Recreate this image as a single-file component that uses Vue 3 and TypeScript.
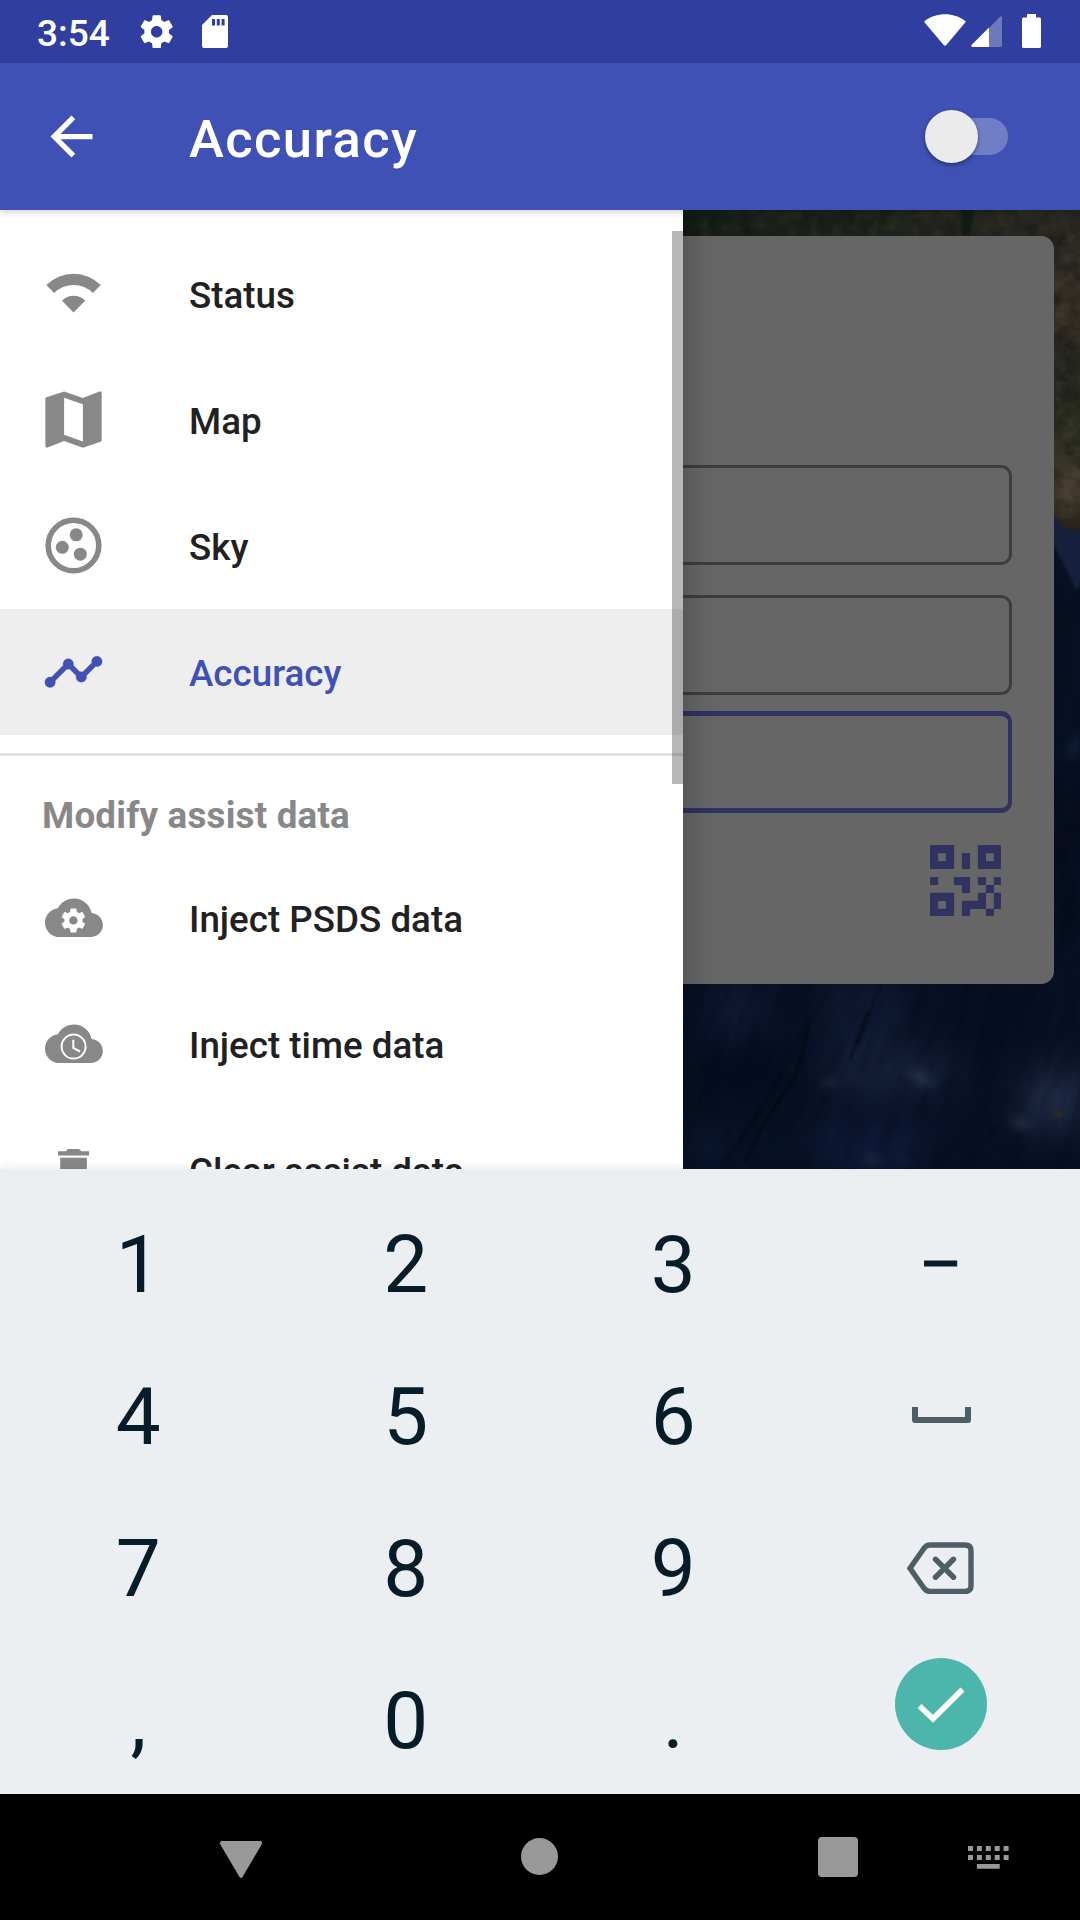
<script setup lang="ts">
interface MenuEntry {
  id: string
  label: string
}

const views: MenuEntry[] = [
  { id: 'status', label: 'Status' },
  { id: 'map', label: 'Map' },
  { id: 'sky', label: 'Sky' },
  { id: 'accuracy', label: 'Accuracy' },
]

const actions: MenuEntry[] = [
  { id: 'psds', label: 'Inject PSDS data' },
  { id: 'time', label: 'Inject time data' },
  { id: 'clear', label: 'Clear assist data' },
]

const active = 'accuracy'

const keys: string[] = ['1', '2', '3', '–', '4', '5', '6', 'space', '7', '8', '9', 'delete', ',', '0', '.', 'enter']

const qrRows: string[] = [
  '111000111',
  '101010101',
  '111010111',
  '000000000',
  '100110101',
  '000010010',
  '111000101',
  '101011101',
  '111010010',
]
const qrPath = qrRows
  .map((row, y) => [...row].map((cell, x) => (cell === '1' ? `M${x} ${y}h1.02v1.02h-1.02z` : '')).join(''))
  .join('')

const gear =
  'M19.43 12.98c.04-.32.07-.64.07-.98s-.03-.66-.07-.98l2.11-1.65c.19-.15.24-.42.12-.64l-2-3.46c-.12-.22-.39-.3-.61-.22l-2.49 1c-.52-.4-1.08-.73-1.69-.98l-.38-2.65C14.46 2.18 14.25 2 14 2h-4c-.25 0-.46.18-.49.42l-.38 2.65c-.61.25-1.17.59-1.69.98l-2.49-1c-.23-.09-.49 0-.61.22l-2 3.46c-.13.22-.07.49.12.64l2.11 1.65c-.04.32-.07.65-.07.98s.03.66.07.98l-2.11 1.65c-.19.15-.24.42-.12.64l2 3.46c.12.22.39.3.61.22l2.49-1c.52.4 1.08.73 1.69.98l.38 2.65c.03.24.24.42.49.42h4c.25 0 .46-.18.49-.42l.38-2.65c.61-.25 1.17-.59 1.69-.98l2.49 1c.23.09.49 0 .61-.22l2-3.46c.12-.22.07-.49-.12-.64l-2.11-1.65zM12 15.5c-1.93 0-3.5-1.57-3.5-3.5s1.57-3.5 3.5-3.5 3.5 1.57 3.5 3.5-1.57 3.5-3.5 3.5z'
const cloud =
  'M19.35 10.04C18.67 6.59 15.64 4 12 4 9.11 4 6.6 5.64 5.35 8.04 2.34 8.36 0 10.91 0 14c0 3.31 2.69 6 6 6h13c2.76 0 5-2.24 5-5 0-2.64-2.05-4.78-4.65-4.96z'
</script>

<template>
  <div class="screen">
    <header class="statusbar">
      <span class="clock">3:54</span>
      <svg class="sb-gear" viewBox="0 0 24 24"><path :d="gear" /></svg>
      <svg class="sb-sd" viewBox="0 0 26 33">
        <path fill-rule="evenodd" d="M10 0H24Q26 0 26 2V31Q26 33 24 33H2Q0 33 0 31V10zM10 4V10.600h3V4zM14.800 4V10.600h3V4zM19.600 4V10.600h3V4z" />
      </svg>
      <span class="spacer"></span>
      <svg class="sb-wifi" viewBox="0 0 42 33">
        <path d="M.6 8.600Q-.1 7.600 1 6.800C12-2 30-2 41 6.800Q42 7.600 41.200 8.600L22.300 31Q21 32.500 19.700 31z" />
      </svg>
      <svg class="sb-signal" viewBox="0 0 31 31">
        <path opacity=".3" d="M18 31V12L29 .7Q31-.5 31 2V29Q31 31 29 31z" />
        <path d="M18 11.500V31H1.500Q-.5 31 .5 29z" />
      </svg>
      <svg class="sb-battery" viewBox="0 0 19 34">
        <path d="M5 0h9v3.500h3.500q1.500 0 1.500 1.500v27.500q0 1.500-1.500 1.500h-16Q0 34 0 32.500V5q0-1.500 1.500-1.500H5z" />
      </svg>
    </header>

    <header class="appbar">
      <svg class="back" viewBox="0 0 24 24">
        <path d="M20 11H7.830l5.590-5.590L12 4l-8 8 8 8 1.410-1.410L7.830 13H20v-2z" />
      </svg>
      <h1 class="title">Accuracy</h1>
      <div class="switch"><span class="thumb"></span></div>
    </header>

    <main class="stage">
      <svg class="terrain" viewBox="0 0 1080 959" preserveAspectRatio="none" color-interpolation-filters="sRGB">
        <defs>
          <filter id="soft" x="620" y="300" width="480" height="680" filterUnits="userSpaceOnUse"><feGaussianBlur stdDeviation="17" /></filter>
          <filter id="softer" x="-50%" y="-50%" width="200%" height="200%"><feGaussianBlur stdDeviation="5" /></filter>
          <filter id="edge" x="-20%" y="-20%" width="140%" height="140%"><feGaussianBlur stdDeviation="1.200" /></filter>
          <filter id="landGrain" x="0" y="0" width="100%" height="100%">
            <feTurbulence type="fractalNoise" baseFrequency=".09" numOctaves="4" seed="5" />
            <feColorMatrix values="0 0 0 0 .27  0 0 0 0 .25  0 0 0 0 .19  2 0 0 0 -.85" />
          </filter>
          <filter id="landShade" x="0" y="0" width="100%" height="100%">
            <feTurbulence type="fractalNoise" baseFrequency=".05" numOctaves="5" seed="12" />
            <feColorMatrix values="0 0 0 0 .05  0 0 0 0 .07  0 0 0 0 .05  2 0 0 0 -.85" />
          </filter>
          <filter id="seaGrain" x="0" y="0" width="100%" height="100%">
            <feTurbulence type="fractalNoise" baseFrequency=".07 .018" numOctaves="4" seed="9" />
            <feColorMatrix values="0 0 0 0 0  0 0 0 0 .01  0 0 0 0 .05  2 0 0 0 -.85" />
          </filter>
          <linearGradient id="north" x1="683" x2="1080" y1="0" y2="0" gradientUnits="userSpaceOnUse">
            <stop offset="0" stop-color="#141e17" />
            <stop offset=".5" stop-color="#1e231d" />
            <stop offset="1" stop-color="#2b2822" />
          </linearGradient>
          <linearGradient id="coast" x1="0" x2="0" y1="26" y2="320" gradientUnits="userSpaceOnUse">
            <stop offset="0" stop-color="#2a2821" />
            <stop offset=".25" stop-color="#382f28" />
            <stop offset=".45" stop-color="#25271f" />
            <stop offset=".65" stop-color="#2b2d21" />
            <stop offset=".85" stop-color="#41372b" />
            <stop offset="1" stop-color="#25221a" />
          </linearGradient>
        </defs>
        <rect width="1080" height="959" fill="#081124" />
        <g filter="url(#soft)">
          <ellipse cx="735" cy="808" rx="24" ry="34" fill="#141a38" />
          <ellipse cx="745" cy="862" rx="45" ry="30" fill="#040c1f" />
          <ellipse cx="865" cy="805" rx="40" ry="40" fill="#101a33" />
          <ellipse cx="890" cy="862" rx="70" ry="22" fill="#17213b" />
          <ellipse cx="1000" cy="800" rx="36" ry="50" fill="#070e22" />
          <ellipse cx="870" cy="937" rx="60" ry="26" fill="#101b3b" />
          <ellipse cx="1055" cy="890" rx="34" ry="34" fill="#212b46" />
          <ellipse cx="700" cy="940" rx="50" ry="20" fill="#0c162d" />
          <ellipse cx="1066" cy="640" rx="20" ry="80" fill="#060d1f" />
        </g>
        <g transform="rotate(20 850 860)">
          <rect width="600" height="460" x="580" y="640" filter="url(#seaGrain)" opacity=".28" />
        </g>
        <rect width="30" height="440" x="1052" y="320" filter="url(#seaGrain)" opacity=".3" />
        <g fill="none" stroke="#02070f" filter="url(#edge)">
          <path stroke-width="3" d="M745 952Q770 900 786 880T808 812" opacity=".7" />
          <path stroke-width="2" d="M725 950Q760 905 780 865M850 850L868 800M858 835L880 774" opacity=".6" />
          <path stroke-width="2" d="M968 952L996 915M800 790L812 774" opacity=".4" />
        </g>
        <g fill="#38435c" filter="url(#softer)" opacity=".5">
          <path d="M818 875q8-8 22-5l-9 7zM848 866q10-2 12 7zM906 860q18-4 30 15l-14 2-8-7zM1008 908q14-4 26 8l-16 4zM864 945q12-3 20 9h-14zM898 952q8-8 14 5z" />
        </g>
        <ellipse cx="1058" cy="904" rx="5" ry="4" fill="#2b2927" filter="url(#edge)" />
        <path d="M1080 520q-16 14-12 30l12-8z" fill="#1a2945" filter="url(#softer)" opacity=".6" />
        <rect width="1080" height="30" fill="url(#north)" />
        <path d="M1050 24h30v298q-10 4-18-2t-12-14z" fill="url(#coast)" />
        <path d="M1080 256q-10 8-26 18v26l26-6z" fill="#4a3f32" filter="url(#softer)" />
        <rect width="1080" height="30" filter="url(#landGrain)" opacity=".3" />
        <rect x="1054" y="24" width="26" height="284" filter="url(#landGrain)" opacity=".6" />
        <rect x="1050" y="24" width="30" height="284" filter="url(#landShade)" opacity=".6" />
        <rect x="680" y="0" width="400" height="30" filter="url(#landShade)" opacity=".5" />
        <path d="M1052 302q10 22 30 18v46q-4 20-8 10t-22-44z" fill="#16203c" filter="url(#edge)" />
        <path d="M961 0h14l-5 26h-8z" fill="#0b1a14" filter="url(#edge)" opacity=".8" />
      </svg>

      <section class="card">
        <div class="field"></div>
        <div class="field second"></div>
        <div class="field focused"></div>
        <svg class="qr" viewBox="0 0 9 9"><path :d="qrPath" /></svg>
      </section>

      <nav class="drawer">
        <ul class="menu views">
          <li v-for="item in views" :key="item.id" class="row" :class="{ active: item.id === active }">
            <svg class="icon" viewBox="0 0 75 75">
              <path v-if="item.id === 'status'" d="M10.300 29a38.600 38.600 0 0 1 54.500 0l-7.900 8a27.400 27.400 0 0 0-38.700 0zM26 44.700a16.300 16.300 0 0 1 23.200 0L37.500 56.400z" />
              <path v-else-if="item.id === 'map'" transform="scale(3.125)" d="M20.500 3l-.16.03L15 5.100 9 3 3.360 4.900c-.21.07-.36.25-.36.48V20.500c0 .28.220.5.5.5l.16-.03L9 18.900l6 2.100 5.640-1.900c.21-.07.36-.25.36-.48V3l-.5 0zM15 19l-6-2.110V5l6 2.110V19z" />
              <g v-else-if="item.id === 'sky'">
                <circle cx="37.500" cy="37.500" r="25.300" fill="none" stroke="currentColor" stroke-width="5.600" />
                <circle cx="40.200" cy="26.800" r="6.500" />
                <circle cx="26.300" cy="39.300" r="6.500" />
                <circle cx="44.300" cy="46.200" r="6.500" />
              </g>
              <path v-else transform="translate(6.300 6.600) scale(2.600)" stroke="currentColor" stroke-width=".15" d="M23 8c0 1.100-.9 2-2 2-.18 0-.35-.02-.51-.07l-3.560 3.550c.05.160.07.340.07.520 0 1.100-.9 2-2 2s-2-.9-2-2c0-.18.020-.36.070-.52l-2.550-2.550c-.16.050-.34.070-.52.070s-.36-.02-.52-.07l-4.550 4.560c.05.160.07.330.07.510 0 1.100-.9 2-2 2s-2-.9-2-2 .9-2 2-2c.18 0 .35.020.51.070l4.560-4.550C8.020 9.360 8 9.180 8 9c0-1.100.9-2 2-2s2 .9 2 2c0 .18-.02.36-.07.52l2.550 2.550c.16-.05.34-.07.52-.07s.36.020.52.070l3.550-3.560C19.020 8.350 19 8.180 19 8c0-1.100.9-2 2-2s2 .9 2 2z" />
            </svg>
            <span>{{ item.label }}</span>
          </li>
        </ul>
        <h2 class="group">Modify assist data</h2>
        <ul class="menu">
          <li v-for="item in actions" :key="item.id" class="row">
            <svg class="icon" viewBox="0 0 75 75">
              <path v-if="item.id !== 'clear'" transform="translate(9 7.900) scale(2.410)" :d="cloud" />
              <path v-if="item.id === 'psds'" fill="#fff" transform="translate(23 25) scale(1.200)" :d="gear" />
              <g v-else-if="item.id === 'time'" fill="none" stroke="#fff" stroke-width="2">
                <circle cx="37.600" cy="39.600" r="12" />
                <path d="M37.300 32.800v8.200l6.700 3.500" />
              </g>
              <path v-else transform="translate(10.900 9.300) scale(2.220)" d="M6 19c0 1.100.9 2 2 2h8c1.100 0 2-.9 2-2V7H6v12zM19 4h-3.500l-1-1h-5l-1 1H5v2h14V4z" />
            </svg>
            <span>{{ item.label }}</span>
          </li>
        </ul>
        <span class="scrollbar"></span>
      </nav>
    </main>

    <section class="keyboard">
      <div v-for="key in keys" :key="key" class="key">
        <svg v-if="key === 'space'" class="k-space" viewBox="0 0 59 16">
          <path d="M3 0V13H56V0" fill="none" stroke="#4d5e67" stroke-width="6" stroke-linejoin="round" />
        </svg>
        <svg v-else-if="key === 'delete'" class="k-del" viewBox="0 0 67 52">
          <path d="M3 26L17 6Q19.500 2.800 23 2.800H58Q64 2.800 64 8.500V43.500Q64 49.200 58 49.200H23Q19.500 49.200 17 46zM28.500 17L46.500 35M46.500 17L28.500 35" fill="none" stroke="#4d5e67" stroke-width="5.400" stroke-linecap="round" />
        </svg>
        <span v-else-if="key === 'enter'" class="k-enter">
          <svg viewBox="0 0 92 92"><path d="M24.500 48L38 60.800L67.500 31.500" fill="none" stroke="#fff" stroke-width="5.600" /></svg>
        </span>
        <span v-else class="glyph" :class="{ dash: key === '–' }">{{ key }}</span>
      </div>
    </section>

    <footer class="navbar">
      <svg class="n-back" viewBox="0 0 42 37">
        <path d="M2 0H40Q43 .5 41.600 3.500L22.500 36Q21 38 19.500 36L.4 3.500Q-1 .5 2 0z" />
      </svg>
      <span class="n-home"></span>
      <span class="n-recent"></span>
      <svg class="n-ime" viewBox="0 0 41 23">
        <path d="M0 0h5v5h-5zM8.900 0h5v5h-5zM17.800 0h5v5h-5zM26.700 0h5v5h-5zM35.600 0h5v5h-5zM0 9h5v5h-5zM8.900 9h5v5h-5zM17.800 9h5v5h-5zM26.700 9h5v5h-5zM35.600 9h5v5h-5zM8.900 18h22.800v4.800H8.900z" />
      </svg>
    </footer>
  </div>
</template>

<style>
body {
  margin: 0;
  background: #000;
}
</style>

<style scoped>
.screen {
  width: 1080px;
  height: 1920px;
  display: flex;
  flex-direction: column;
  overflow: hidden;
  font-family: Roboto, 'Liberation Sans', sans-serif;
}
svg {
  display: block;
  flex: none;
  fill: currentColor;
}
.statusbar {
  height: 63px;
  flex: none;
  box-sizing: border-box;
  display: flex;
  align-items: flex-start;
  padding: 0 39px 0 37px;
  background: #303f9f;
  color: #fff;
}
.clock {
  width: 100px;
  padding-top: 12px;
  font-size: 37px;
  font-weight: 500;
  line-height: 44px;
}
.sb-gear {
  width: 39.400px;
  height: 39.400px;
  margin-top: 12px;
}
.sb-sd {
  width: 26px;
  height: 33px;
  margin: 15px 0 0 25.600px;
}
.spacer {
  flex: 1;
}
.sb-wifi {
  width: 42px;
  height: 33px;
  margin: 14px 5px 0 0;
}
.sb-signal {
  width: 31px;
  height: 31px;
  margin: 16px 20px 0 0;
}
.sb-battery {
  width: 19px;
  height: 34px;
  margin-top: 14px;
}
.appbar {
  height: 147px;
  flex: none;
  box-sizing: border-box;
  display: flex;
  align-items: center;
  padding: 0 72px 0 39.500px;
  background: #3f51b5;
  color: #fff;
  position: relative;
  z-index: 3;
  box-shadow: 0 2px 8px rgba(0, 0, 0, 0.18);
}
.back {
  width: 63px;
  height: 63px;
  margin-top: -1px;
}
.title {
  flex: 1;
  margin: 4px 0 0 86.500px;
  font-size: 52.500px;
  font-weight: 500;
  line-height: 60px;
  letter-spacing: 1.400px;
}
.switch {
  width: 74px;
  height: 37px;
  border-radius: 19px;
  background: rgba(255, 255, 255, 0.26);
  position: relative;
}
.thumb {
  position: absolute;
  left: -9px;
  top: -8px;
  width: 53px;
  height: 53px;
  border-radius: 50%;
  background: #ebebeb;
  box-shadow: 0 2px 4px rgba(0, 0, 0, 0.4);
}
.stage {
  height: 959px;
  flex: none;
  box-sizing: border-box;
  position: relative;
  overflow: hidden;
  padding: 26px;
}
.terrain {
  position: absolute;
  left: 0;
  top: 0;
  width: 1080px;
  height: 959px;
}
.card {
  position: relative;
  height: 748px;
  box-sizing: border-box;
  display: flex;
  flex-direction: column;
  padding: 229px 42px 0;
  border-radius: 13px;
  background: #666;
}
.field {
  height: 100px;
  flex: none;
  box-sizing: border-box;
  border: 3px solid #3d3d3d;
  border-radius: 11px;
}
.second {
  margin-top: 30px;
}
.focused {
  height: 102px;
  margin-top: 16px;
  border: 5px solid #30325f;
  border-right-width: 4px;
}
.qr {
  width: 71.800px;
  height: 71.800px;
  margin: 31.500px 10.700px 0 0;
  align-self: flex-end;
  color: #30325f;
}
.drawer {
  position: absolute;
  left: 0;
  top: 0;
  width: 683px;
  height: 959px;
  box-sizing: border-box;
  padding-top: 21px;
  background: #fff;
  box-shadow: 0 0 32px rgba(0, 0, 0, 0.28);
}
.menu {
  list-style: none;
  margin: 0;
  padding: 0;
}
.row {
  height: 126px;
  display: flex;
  align-items: center;
  padding-left: 36px;
  font-size: 36.750px;
  font-weight: 500;
  color: #212121;
}
.row span {
  margin-left: 78px;
  line-height: 44px;
  padding-top: 2px;
}
.views .row span {
  padding-top: 4px;
}
.icon {
  width: 75px;
  height: 75px;
  margin-top: -1px;
  color: #888;
}
.active {
  background: #eee;
}
.row.active,
.active .icon {
  color: #3f51b5;
}
.group {
  height: 100px;
  margin: 18px 0 0;
  padding-left: 42px;
  border-top: 3px solid #e2e2e2;
  font-size: 36.750px;
  font-weight: 700;
  line-height: 120px;
  letter-spacing: 0.210px;
  color: #888;
}
.scrollbar {
  position: absolute;
  right: 0;
  top: 21px;
  width: 11px;
  height: 553px;
  background: rgba(0, 0, 0, 0.28);
}
.keyboard {
  height: 625px;
  flex: none;
  box-sizing: border-box;
  display: grid;
  grid-template-columns: repeat(4, 267.500px);
  grid-auto-rows: 152px;
  justify-content: center;
  padding-top: 19px;
  background: #eceff1;
  color: #061c28;
  position: relative;
  z-index: 3;
  box-shadow: 0 -2px 8px rgba(0, 0, 0, 0.08);
}
.key {
  display: flex;
  align-items: center;
  justify-content: center;
  font-size: 80px;
  line-height: 94px;
}
.glyph {
  padding: 2px 0.800px 0 0;
}
.dash {
  font-size: 66px;
  padding-top: 1px;
  -webkit-text-stroke: 0.900px #061c28;
}
.k-space {
  width: 59px;
  height: 16px;
  margin-top: -3px;
}
.k-del {
  width: 67px;
  height: 52.500px;
  margin-right: 1.500px;
}
.k-enter {
  width: 92px;
  height: 92px;
  border-radius: 50%;
  background: #4db6ac;
  margin-top: -32px;
}
.navbar {
  height: 126px;
  flex: none;
  box-sizing: border-box;
  display: flex;
  align-items: flex-start;
  padding-left: 220px;
  background: #000;
  color: #999;
}
.n-back {
  width: 42px;
  height: 37px;
  margin-top: 47px;
}
.n-home {
  width: 37px;
  height: 37px;
  margin: 44px 0 0 259px;
  border-radius: 50%;
  background: #999;
}
.n-recent {
  width: 40px;
  height: 40px;
  margin: 43px 0 0 260px;
  border-radius: 4px;
  background: #999;
}
.n-ime {
  width: 41px;
  height: 23px;
  margin: 52px 0 0 110px;
}
</style>
